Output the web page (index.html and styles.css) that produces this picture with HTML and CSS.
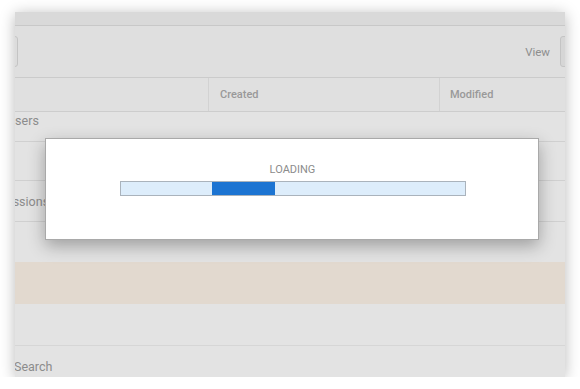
FILE: index.html
```html
<!DOCTYPE html>
<html lang="en">
<head>
    <meta charset="UTF-8">
    <meta name="viewport" content="width=device-width, initial-scale=1.0">
    <link rel="stylesheet" href="styles.css">
</head>
<body>

<div class="panel">
    <div class="topbar"></div>

    <div class="toolbar">
        <div class="btn-stub left"></div>
        <div class="toolbar-right">
            <span class="view-label">View</span>
            <div class="btn-stub right"></div>
        </div>
    </div>

    <div class="thead">
        <div class="th"></div>
        <div class="th">Created</div>
        <div class="th">Modified</div>
    </div>

    <div class="row first"><span class="cut users">Users</span></div>
    <div class="row short"></div>
    <div class="row center"><span class="cut perms">Permissions</span></div>
    <div class="row plain"></div>
    <div class="row beige"></div>
    <div class="row plain tall"></div>
    <div class="row search"><span>Search</span></div>

    <!-- Dialogo de carga -->
    <div class="loading">
        <div class="loading-label">LOADING</div>
        <div class="progress">
            <div class="progress-fill"></div>
        </div>
    </div>
</div>

</body>
</html>
```

FILE: styles.css
```css
body {
    margin: 0;
    background: #fff;
    font-family: Roboto, "Noto Sans", sans-serif;
}

.panel {
    position: relative;
    margin: 12px 0 0 15px;
    width: 550px;
    height: 365px;
    background: #e3e3e3;
    overflow: hidden;
    box-shadow: 0 2px 14px rgba(0, 0, 0, 0.28);
}

.topbar {
    height: 13px;
    background: #d9d9d9;
    border-bottom: 1px solid #c8c8c8;
}

.toolbar {
    height: 51px;
    display: flex;
    align-items: center;
    justify-content: space-between;
    background: #dfdfdf;
    border-bottom: 1px solid #cbcbcb;
}

.toolbar-right {
    display: flex;
    align-items: center;
    gap: 10px;
}

.view-label {
    font-size: 11.5px;
    color: #8e8e8e;
}

.btn-stub {
    width: 12px;
    height: 29px;
    border: 1px solid #c4c4c4;
    border-radius: 3px;
    background: #dcdcdc;
}

.btn-stub.left {
    margin-left: -11px;
}

.btn-stub.right {
    margin-right: -9px;
    background: #d6d6d6;
}

.thead {
    height: 33px;
    display: grid;
    grid-template-columns: 193px 231px 1fr;
    background: #e0e0e0;
    border-bottom: 1px solid #cdcdcd;
}

.th {
    display: flex;
    align-items: center;
    padding-left: 11px;
    font-size: 11px;
    font-weight: 500;
    color: #999;
    border-left: 1px solid #d2d2d2;
}

.th:last-child {
    padding-left: 10px;
}

.th:first-child {
    border-left: none;
}

.row {
    height: 40px;
    display: flex;
    align-items: center;
    font-size: 12.5px;
    color: #8c8c8c;
    border-bottom: 1px solid #d0d0d0;
    background: #e3e3e3;
}

.row.first {
    height: 28px;
    align-items: flex-start;
    padding-top: 1px;
}

.row.short {
    height: 38px;
}

.row.plain {
    border-bottom: none;
}

.row.tall {
    height: 41px;
}

.row.beige {
    height: 42px;
    background: #e2d9cf;
    border-bottom: none;
}

.row.search {
    height: 31px;
    align-items: flex-end;
    border-bottom: none;
    border-top: 1px solid #d6d6d6;
}

.row.search span {
    margin-left: -1px;
    line-height: 20px;
    margin-bottom: 0;
}

.cut.users {
    margin-left: -8px;
}

.cut.perms {
    margin-left: -35px;
}

/* Ventana de carga */
.loading {
    position: absolute;
    left: 30px;
    top: 126px;
    width: 494px;
    height: 102px;
    background: #fff;
    border: 1px solid #a9a9a9;
    box-shadow: 0 6px 16px rgba(0, 0, 0, 0.3);
    display: flex;
    flex-direction: column;
    align-items: center;
    padding-top: 24px;
    box-sizing: border-box;
}

.loading-label {
    font-size: 11px;
    color: #8c8c8c;
    line-height: 13px;
    margin-bottom: 5px;
    margin-left: 1px;
}

.progress {
    position: relative;
    width: 344px;
    height: 13px;
    margin-left: 2px;
    border: 1px solid #aab3bc;
    background: #ddedfb;
}

.progress-fill {
    position: absolute;
    left: 91px;
    top: 0;
    width: 63px;
    height: 100%;
    background: #1c74d2;
}
```
